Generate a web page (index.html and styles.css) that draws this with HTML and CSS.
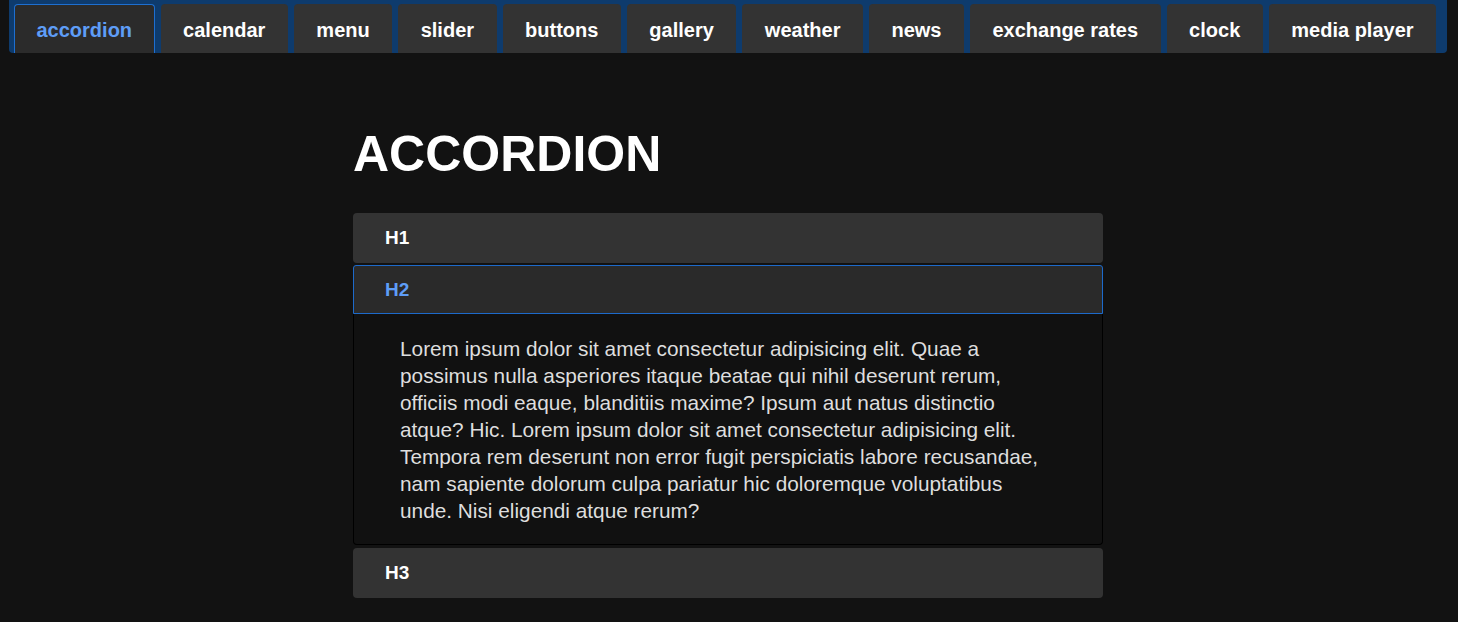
FILE: index.html
```html
<!DOCTYPE html>
<html lang="en">
<head>
<meta charset="utf-8">
<title>Accordion</title>
<link rel="stylesheet" href="styles.css">
</head>
<body>
<nav class="tabs">
  <a class="tab active">accordion</a>
  <a class="tab">calendar</a>
  <a class="tab">menu</a>
  <a class="tab">slider</a>
  <a class="tab">buttons</a>
  <a class="tab">gallery</a>
  <a class="tab">weather</a>
  <a class="tab">news</a>
  <a class="tab">exchange rates</a>
  <a class="tab">clock</a>
  <a class="tab">media player</a>
</nav>
<main class="page">
  <h1 class="title">ACCORDION</h1>
  <div class="accordion">
    <div class="item">
      <div class="item-head">H1</div>
    </div>
    <div class="item open">
      <div class="item-head">H2</div>
      <div class="item-body">
        <p>Lorem ipsum dolor sit amet consectetur adipisicing elit. Quae a possimus nulla asperiores itaque beatae qui nihil deserunt rerum, officiis modi eaque, blanditiis maxime? Ipsum aut natus distinctio atque? Hic. Lorem ipsum dolor sit amet consectetur adipisicing elit. Tempora rem deserunt non error fugit perspiciatis labore recusandae, nam sapiente dolorum culpa pariatur hic doloremque voluptatibus unde. Nisi eligendi atque rerum?</p>
      </div>
    </div>
    <div class="item">
      <div class="item-head">H3</div>
    </div>
  </div>
</main>
</body>
</html>
```
FILE: styles.css
```css
html, body {
  margin: 0;
  padding: 0;
  background: #121212;
  font-family: "Liberation Sans", Arial, sans-serif;
  color: #fff;
}

body {
  padding-right: 2px;
}

.tabs {
  display: flex;
  gap: 6px;
  margin: 0 9px 0 9px;
  padding: 4px 5px 0;
  background: #0e3b6d;
  border-radius: 0 0 4px 4px;
}

.tab {
  display: flex;
  align-items: center;
  flex-shrink: 0;
  height: 49px;
  box-sizing: border-box;
  padding: 2px 21.5px 0;
  border: 1px solid transparent;
  border-bottom: none;
  border-radius: 4px 4px 0 0;
  background: #333;
  color: #fff;
  font-weight: bold;
  font-size: 20px;
  white-space: nowrap;
}

.tab.active {
  background: #2b2b2b;
  border-color: #1d6fd1;
  color: #5e9df7;
}

.page {
  width: 750px;
  margin: 0 auto;
}

.title {
  margin: 72px 0 30px;
  font-size: 50px;
  font-weight: bold;
  line-height: normal;
}

.item {
  margin-bottom: 2px;
}

.item.open {
  margin-bottom: 3px;
}

.item-head {
  height: 50px;
  box-sizing: border-box;
  display: flex;
  align-items: center;
  padding: 0 32px;
  background: #333;
  border-radius: 4px;
  font-weight: bold;
  font-size: 19px;
  color: #fff;
}

.item.open .item-head {
  height: 49px;
  background: #2a2a2a;
  border: 1px solid #1d6acb;
  border-radius: 3px 3px 0 0;
  padding-left: 31px;
  color: #5e9df7;
}

.item-body {
  background: #111;
  border: 1px solid #000;
  border-top: none;
  border-radius: 0 0 4px 4px;
  padding: 21px 50px 20px 46px;
}

.item-body p {
  margin: 0;
  font-size: 20.8px;
  line-height: 27px;
  color: #dedede;
}
```
